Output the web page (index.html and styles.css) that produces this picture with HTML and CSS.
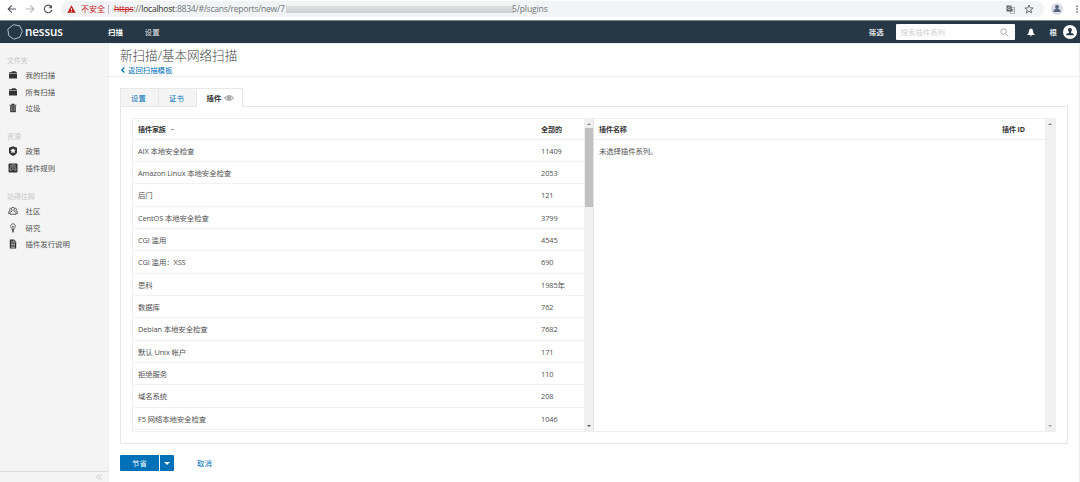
FILE: index.html
```html
<!DOCTYPE html>
<html lang="zh-CN">
<head>
<meta charset="utf-8">
<title>Nessus</title>
<link rel="stylesheet" href="styles.css">
</head>
<body>
<div class="browser">
  <svg class="nav-icon back" viewBox="0 0 10 10"><path d="M9 5H1.5M4.8 1.4L1.2 5l3.6 3.6"/></svg>
  <svg class="nav-icon forward" viewBox="0 0 10 10"><path d="M1 5h7.5M5.2 1.4L8.8 5 5.2 8.6"/></svg>
  <svg class="nav-icon reload" viewBox="0 0 10 10"><path d="M8.2 2.6A3.8 3.8 0 1 0 8.8 6"/><path class="solid" d="M9 .8v3.5H5.5z"/></svg>
  <div class="address">
    <svg class="warning" viewBox="0 0 10 9"><path d="M5 .4L9.7 8.6H.3z" fill="#c5221f"/><path d="M5 3.5v2.2M5 6.5v1" stroke="#fff"/></svg>
    <span class="unsafe">不安全</span>
    <span class="separator"></span>
    <span class="url-start"><s>https</s>://<b>localhost</b>:8834/#/scans/reports/new/7</span>
    <span class="redacted"></span>
    <span class="url-end">5/plugins</span>
    <svg class="translate" viewBox="0 0 9 9"><path d="M3.5 2.4h5v6h-4z" fill="#fff" stroke="#777" stroke-width=".6"/><path d="M.5.5h4.7l1.3 6h-6z" fill="#5f6368"/><path d="M4.3 2.7a1.3 1.3 0 1 0 .1 1.2H3.3" fill="none" stroke="#fff" stroke-width=".6"/><path d="M5.6 4.2h2.3M7.3 4.2c0 1.2-.8 2-1.5 2.6M6 5l1.7 2" fill="none" stroke="#777" stroke-width=".5"/></svg>
    <svg class="star" viewBox="0 0 10 10"><path d="M5 1l1.1 2.8 3 .2-2.3 1.9.8 3L5 7.3 2.4 8.9l.8-3L.9 4l3-.2z"/></svg>
  </div>
  <span class="profile"><svg viewBox="0 0 12 12"><circle cx="6" cy="4" r="1.9"/><path d="M2.500 9V8c0-1.300 2-1.900 3.500-1.900S9.500 6.700 9.500 8v1z"/></svg></span>
  <svg class="dots" viewBox="0 0 2 8"><path d="M.3.4h1.500v1.500H.3zM.3 3.300h1.500v1.500H.3zM.3 6.200h1.500v1.500H.3z"/></svg>
</div>

<header class="topbar">
  <svg class="logo-mark" viewBox="0 0 16 16"><path d="M6.500.7l6.400 1.200 2.400 5.600-2.600 5.800-5.900 1.900-5-3.500L.8 5.200z"/></svg>
  <span class="logo-text">nessus</span>
  <nav class="top-nav"><a class="current">扫描</a><a>设置</a></nav>
  <span class="filter">筛选</span>
  <div class="search"><span>搜索插件系列</span><svg viewBox="0 0 9 9"><circle cx="3.600" cy="3.600" r="2.800"/><path d="M5.700 5.700l2.600 2.600"/></svg></div>
  <svg class="bell" viewBox="0 0 8 9"><path d="M4 .5c1.700.5 2.100 1.700 2.200 3.300.1 1.500.6 2 1.500 2.700v.4H.3v-.4c.9-.7 1.400-1.200 1.500-2.700C1.900 2.200 2.300 1 4 .5zM3 7.400h2c0 1.200-2 1.200-2 0z"/></svg>
  <span class="user-name">根</span>
  <svg class="avatar" viewBox="0 0 14 14"><circle cx="7" cy="7" r="7" fill="#fff"/><path d="M7 3c2.600 0 2.100 2.900 1 3.900v1.200c1.500.2 2.900.6 2.900 2.200H3.100c0-1.600 1.400-2 2.900-2.200V6.900C4.900 5.900 4.400 3 7 3z" fill="#263746"/></svg>
</header>

<div class="body">
  <aside class="sidebar">
    <section class="side-group">
      <h2>文件夹</h2>
      <a><svg viewBox="0 0 10 10"><path d="M1 2.200h2.500l.7-1h3.300l.5 1h1v.9H1zM1 3.400h8v5.200H1z"/></svg>我的扫描</a>
      <a><svg viewBox="0 0 10 10"><path d="M1 2.200h2.500l.7-1h3.300l.5 1h1v.9H1zM1 3.400h8v5.200H1z"/></svg>所有扫描</a>
      <a><svg viewBox="0 0 10 10"><path d="M3.600.8h2.800v.9H8.300v1.100H1.700V1.700h1.900z"/><path d="M2.200 3.200h5.600v6H2.200z"/><path class="cut" d="M3.900 4.200v4M6.100 4.200v4"/></svg>垃圾</a>
    </section>
    <section class="side-group">
      <h2>资源</h2>
      <a><svg viewBox="0 0 10 10"><path d="M5 .2l4 1.500v4.600C8.500 8.200 6.800 9.300 5 9.900 3.200 9.300 1.500 8.200 1 6.300V1.700z"/><path fill="#f4f4f4" d="M5 2.300l.9 1.300 1.800.3-1.200 1.300.3 1.900L5 6.500l-1.800.6.300-1.900-1.200-1.300 1.800-.3z"/></svg>政策</a>
      <a><svg viewBox="0 0 10 10"><rect x=".5" y=".5" width="9" height="9" rx="1"/><path class="cut" d="M2 3.200C3 1.500 7 1.500 8 3.200M2.200 7.800V5.500C2.200 3.300 7.800 3.300 7.800 5.500v2.300M3.400 7.500l1.600-2 1.600 2"/></svg>插件规则</a>
    </section>
    <section class="side-group">
      <h2>站得住脚</h2>
      <a><svg class="line" viewBox="0 0 10 10"><path d="M5 1.300c2 0 1.700 2.900.7 3.600l1.800 1c.7.500.5 2 .5 2.400H2c0-.4-.2-1.900.5-2.400l1.800-1C3.300 4.200 3 1.300 5 1.300zM3.300 2.100C1.500 1.700 1.200 4 2.100 4.800L.6 5.700C.1 6 .2 7 .2 7.300H2M6.700 2.100c1.800-.4 2.100 1.900 1.200 2.700l1.500.9c.5.300.4 1.300.4 1.600H8"/></svg>社区</a>
      <a><svg class="line" viewBox="0 0 10 10"><path d="M4 6.500C4 5.300 2.700 4.900 2.700 3.300 2.700-.1 7.300-.1 7.300 3.300 7.300 4.900 6 5.300 6 6.500zM4 7.500h2M4 8.400h2M4.500 9.300h1M4.300 3l.7 1 .7-1M5 4v2.300"/></svg>研究</a>
      <a><svg viewBox="0 0 10 10"><path d="M1.800.5h4.400l2 2.200v6.800H1.800z"/><path class="cut" d="M3 4h4M3 5.500h4M3 7h4M3 8.400h4M5.800 1v2h2M3 2.300h1.500"/></svg>插件发行说明</a>
    </section>
    <div class="collapse"><svg viewBox="0 0 6 6"><path d="M2.800.5L.6 3l2.200 2.500M5.400.5L3.200 3l2.200 2.500"/></svg></div>
  </aside>

  <main class="main">
    <div class="page-head">
      <h1>新扫描/基本网络扫描</h1>
      <a class="back-link"><svg viewBox="0 0 4 6"><path d="M3.300.5L.9 3l2.400 2.500"/></svg>返回扫描模板</a>
    </div>
    <div class="tabs">
      <a class="tab">设置</a><a class="tab">证书</a><a class="tab active">插件<svg viewBox="0 0 10 6"><path d="M.4 3C2.600-.1 7.400-.1 9.600 3 7.400 6.100 2.600 6.100.4 3z"/><circle cx="5" cy="2.800" r="1.700"/><circle cx="5" cy="2.800" r=".6"/></svg></a>
    </div>
    <div class="panel">
      <div class="tables">
        <div class="families">
          <div class="row head"><span>插件家族 <i class="sort"></i></span><span>全部的</span></div>
          <div class="row"><span>AIX 本地安全检查</span><span>11409</span></div>
          <div class="row"><span>Amazon Linux 本地安全检查</span><span>2053</span></div>
          <div class="row"><span>后门</span><span>121</span></div>
          <div class="row"><span>CentOS 本地安全检查</span><span>3799</span></div>
          <div class="row"><span>CGI 滥用</span><span>4545</span></div>
          <div class="row"><span>CGI 滥用：XSS</span><span>690</span></div>
          <div class="row"><span>思科</span><span>1985年</span></div>
          <div class="row"><span>数据库</span><span>762</span></div>
          <div class="row"><span>Debian 本地安全检查</span><span>7682</span></div>
          <div class="row"><span>默认 Unix 帐户</span><span>171</span></div>
          <div class="row"><span>拒绝服务</span><span>110</span></div>
          <div class="row"><span>域名系统</span><span>208</span></div>
          <div class="row"><span>F5 网络本地安全检查</span><span>1046</span></div>
        </div>
        <div class="scrollbar"><i class="up"></i><i class="thumb"></i><i class="down"></i></div>
        <div class="plugins">
          <div class="row head"><span>插件名称</span><span>插件 ID</span></div>
          <div class="row empty"><span>未选择插件系列。</span></div>
        </div>
        <div class="scrollbar idle"><i class="up"></i><i class="down"></i></div>
      </div>
    </div>
    <div class="actions">
      <span class="save">节省</span><span class="save-menu"><i></i></span><a class="cancel">取消</a>
    </div>
  </main>
</div>
</body>
</html>
```
FILE: styles.css
```css
* { box-sizing: border-box; }
body {
  margin: 0;
  width: 1080px;
  height: 482px;
  overflow: hidden;
  display: flex;
  flex-direction: column;
  background: #fff;
  color: #505050;
  font: 7.4px/10px "Open Sans", "Noto Sans CJK SC", sans-serif;
}
svg { display: block; flex: none; }
i { font-style: normal; }
span, a { white-space: nowrap; }

.browser {
  height: 21px;
  flex: none;
  display: flex;
  align-items: center;
  padding: 0 2px 2px 7px;
  border-bottom: 1px solid #7c8488;
}
.nav-icon { width: 10px; height: 10px; margin-right: 8px; fill: none; stroke: #50555a; stroke-width: 1.1; }
.nav-icon.forward { stroke: #b4b6b8; }
.nav-icon .solid { fill: #50555a; stroke: none; }
.address {
  flex: 0 0 983px;
  height: 16px;
  display: flex;
  align-items: center;
  border-radius: 8px;
  background: #f1f3f4;
  padding: 0 15px 0 6px;
  font-size: 8.6px;
  color: #70757a;
}
.warning { width: 9px; height: 8px; margin-right: 5px; }
.unsafe { width: 24px; font-size: 8px; color: #c5221f; }
.separator { width: 1px; height: 9px; margin: 0 5px 0 3px; background: #bbb; }
.url-start { width: 172px; letter-spacing: -.26px; }
.url-start s { color: #c5221f; }
.url-start b { color: #333; font-weight: 400; }
.redacted { width: 228px; height: 7px; background: linear-gradient(#dedfdf, #cfd0d1); }
.url-end { margin-left: -2px; letter-spacing: -.15px; }
.translate { width: 9px; height: 9px; margin-left: auto; margin-right: 9px; }
.star { width: 10px; height: 10px; margin-right: -10px; margin-right: -5px; fill: none; stroke: #5f6368; stroke-width: .9; }
.profile { width: 12px; height: 12px; margin-left: 7px; border-radius: 50%; background: #d9dce3; flex: none; }
.profile svg { width: 12px; height: 12px; fill: #56617c; }
.dots { width: 2px; height: 8px; margin-left: auto; fill: #5f6368; }

.topbar {
  height: 22px;
  flex: none;
  display: flex;
  align-items: center;
  padding: 0 3px 0 7px;
  background: #263746;
  color: #e7ebee;
}
.logo-mark { width: 16px; height: 16px; fill: none; stroke: #d5dce1; stroke-width: .8; }
.logo-text { width: 38px; margin-left: 2px; padding-bottom: 1px; color: #fff; font: 600 11.6px/16px "Open Sans", sans-serif; letter-spacing: -.1px; }
.top-nav { display: flex; gap: 22px; margin-left: 45px; }
.top-nav .current { color: #fff; font-weight: 700; }
.filter { margin-left: auto; font-weight: 700; }
.search {
  width: 119px;
  height: 16px;
  margin-left: 12px;
  display: flex;
  align-items: center;
  justify-content: space-between;
  padding: 0 6px 0 5px;
  border-radius: 1px;
  background: #fff;
  color: #d0d0d0;
}
.search svg { width: 9px; height: 9px; fill: none; stroke: #aaa; }
.bell { width: 8px; height: 9px; margin-left: 12px; fill: #fff; }
.user-name { margin-left: 15px; font-weight: 700; }
.avatar { width: 14px; height: 14px; margin-left: 6px; }

.body { flex: 1; min-height: 0; display: flex; border-top: 1px solid #eceff1; }
.sidebar {
  width: 109px;
  flex: none;
  display: flex;
  flex-direction: column;
  gap: 13px;
  padding-top: 9px;
  background: #f4f4f4;
  border-right: 1px solid #efefef;
}
.side-group { flex: none; display: flex; flex-direction: column; }
.side-group h2 { height: 14px; margin: 0; padding: 1px 0 0 7px; color: #c9c9c9; font-size: 6.9px; font-weight: 400; line-height: 14px; }
.side-group a { height: 16.4px; display: flex; align-items: center; padding-left: 8px; }
.side-group svg { width: 10px; height: 10px; margin-right: 7.5px; fill: #333; }
.side-group .line { fill: none; stroke: #444; stroke-width: .8; }
.side-group .cut { fill: none; stroke: #c8c8c8; stroke-width: .7; }
.collapse { height: 11px; margin-top: auto; display: flex; align-items: center; justify-content: flex-end; padding-right: 6px; border-top: 1px solid #ddd; }
.collapse svg { width: 6px; height: 6px; fill: none; stroke: #bbb; stroke-width: .7; }

.main { flex: 1; min-width: 0; display: flex; flex-direction: column; border-right: 1px solid #eee; }
.page-head { height: 33px; flex: none; padding: 3px 0 0 11px; border-bottom: 1px solid #eee; }
h1 { margin: 0; font-size: 12.55px; font-weight: 300; line-height: 18px; color: #444; }
.back-link { display: flex; align-items: center; gap: 3px; padding-left: 1px; color: #0071b9; }
.back-link svg { width: 4px; height: 6px; fill: none; stroke: #0071b9; stroke-width: 1.3; }

.tabs { display: flex; margin: 11px 0 0 11px; height: 19px; flex: none; position: relative; }
.tab {
  width: 38px;
  height: 18px;
  display: flex;
  align-items: center;
  justify-content: center;
  padding-right: 2px;
  background: #f4f4f4;
  border: 1px solid #e8e8e8;
  border-width: 1px 0 0 1px;
  color: #0071b9;
}
.tab.active { width: 47px; height: 19px; padding: 0 0 1px 2px; gap: 3px; background: #fff; border-right-width: 1px; border-radius: 0 2px 0 0; color: #333; font-weight: 700; }
.tab svg { width: 10px; height: 6px; fill: #ddd; stroke: #888; stroke-width: .7; }
.panel { width: 948px; height: 338px; flex: none; margin: -1px 0 0 11px; padding: 11px; border: 1px solid #e8e8e8; }
.tables { height: 314px; display: flex; border: 1px solid #efefef; letter-spacing: -.1px; }
.families { width: 451px; overflow: hidden; }
.plugins { flex: 1; border-left: 1px solid #e4e4e4; }
.row { height: 22.35px; display: flex; align-items: center; justify-content: space-between; padding: 1px 0 0 5px; border-bottom: 1px solid #f2f2f2; }
.families .row span:last-child { width: 43px; }
.row.head { height: 20.5px; color: #333; font-size: 7.05px; font-weight: 700; }
.plugins .head span:last-child { width: 43px; }
.row.empty { border: 0; }
.sort { display: inline-block; width: 3px; height: 1px; margin: 0 0 2px 3px; background: #999; }
.scrollbar { width: 9px; display: flex; flex-direction: column; align-items: center; background: #f0f0f0; padding: 4px 0; }
.scrollbar.idle { width: 10px; padding-right: 1px; }
.up { border: 2px solid transparent; border-top: 0; border-bottom-color: #8b8b8b; }
.down { margin-top: auto; border: 2px solid transparent; border-bottom: 0; border-top-color: #505050; }
.idle .down { border-top-color: #a3a3a3; }
.thumb { width: 8px; height: 79px; margin-top: 3px; background: #c1c1c1; }

.actions { display: flex; align-items: center; height: 16px; margin: 11px 0 0 11px; }
.save, .save-menu { height: 16px; display: flex; align-items: center; justify-content: center; background: #0071b9; color: #fff; }
.save { width: 39px; border-radius: 1px 0 0 1px; }
.save-menu { width: 14px; margin-left: 1px; border-radius: 0 1px 1px 0; }
.save-menu i { border: 3px solid transparent; border-bottom: 0; border-top-color: #fff; }
.cancel { margin-left: 23px; color: #0071b9; }
```
